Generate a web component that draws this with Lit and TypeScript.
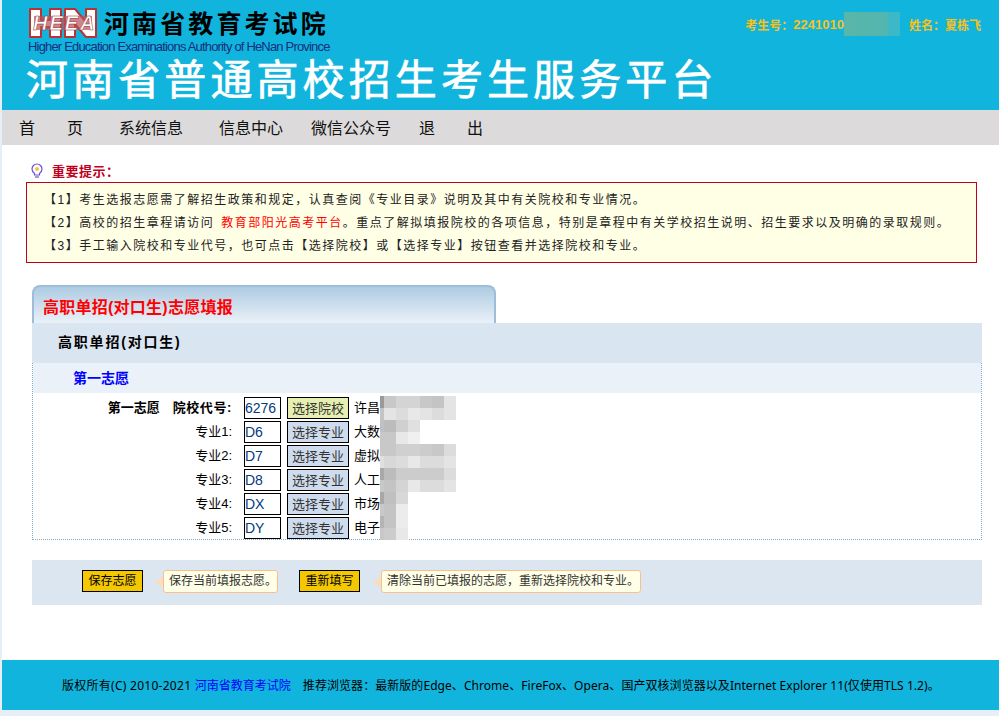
import { css, html, LitElement, svg } from "lit";
import { customElement } from "lit/decorators.js";

// grey levels of the blurred patch next to the school names, row by row
const MOSAIC: number[][] = [
  [0x9a, 0xc8, 0xd4, 0xd4, 0xc8, 0xc4, 0xe4],
  [0xc4, 0xe4, 0xdc, 0xe8, 0xe4, 0xdc, 0xe4],
  [0xc0, 0xbc, 0xd0, 0xe0],
  [0xc8, 0xc8, 0xe8, 0xf0],
  [0xc8, 0xc8, 0xd0, 0xd0, 0xcc, 0xc8, 0xdc],
  [0xe0, 0xd8, 0xdc, 0xe8, 0xdc, 0xdc, 0xe4],
  [0xa8, 0xbc, 0xcc, 0xcc, 0xcc, 0xcc, 0xdc],
  [0xc8, 0xc4, 0xd4, 0xe8, 0xdc, 0xdc, 0xe4],
  [0xa8, 0xc0, 0xd8],
  [0xc8, 0xc4, 0xec],
  [0xb4, 0xc4, 0xec],
  [0xc8, 0xcc, 0xe8],
];

const ROWS = [
  { label: "专业1:", code: "D6", name: "大数据" },
  { label: "专业2:", code: "D7", name: "虚拟现" },
  { label: "专业3:", code: "D8", name: "人工智" },
  { label: "专业4:", code: "DX", name: "市场营" },
  { label: "专业5:", code: "DY", name: "电子商" },
];

@customElement("app-root")
export class AppRoot extends LitElement {
  static styles = css`
    :host {
      display: block;
      height: 716px;
      padding-left: 2px;
      box-sizing: border-box;
      background: #e6eff8;
      overflow: hidden;
      font-family: "Liberation Sans", "Noto Sans CJK SC", sans-serif;
      font-size: 12px;
      color: #000;
    }

    .header {
      height: 110px;
      background: #11b4dc;
      display: flex;
      justify-content: space-between;
    }
    .brand {
      padding: 6px 0 0 26px;
    }
    .brand-top {
      display: flex;
      align-items: center;
      gap: 6px;
      height: 34px;
    }
    .brand-name {
      font-size: 25px;
      font-weight: 700;
      letter-spacing: 3.1px;
      line-height: 34px;
      margin-top: 2px;
    }
    .brand-en {
      height: 14px;
      font-size: 13px;
      line-height: 14px;
      letter-spacing: -0.82px;
      color: #14307f;
      white-space: nowrap;
    }
    .brand-title {
      margin: 1px 0 0 -2px;
      font-size: 42px;
      line-height: 52px;
      letter-spacing: 4.1px;
      color: #fff;
      -webkit-text-stroke: 0.7px #fff;
      white-space: nowrap;
    }
    .user {
      display: flex;
      align-items: center;
      height: 24px;
      margin: 12px 18px 0 0;
      font-size: 12px;
      font-weight: 700;
      color: #f9c11a;
      white-space: nowrap;
    }
    .user-id {
      font-size: 13px;
    }
    .user-blur {
      width: 56px;
      height: 24px;
      margin-right: 9px;
      background: linear-gradient(90deg, #5ab6a8 0, #52b6b0 44px, #3cb8c6 44px);
    }

    .nav {
      height: 35px;
      background: #dcdadb;
      display: flex;
      align-items: center;
      padding: 0 0 2px 17px;
      box-sizing: border-box;
      font-size: 16px;
      color: #111;
    }
    .nav span {
      margin-right: 28px;
    }
    .nav .pair {
      letter-spacing: 32px;
      margin-right: 4px;
    }
    .nav .pair:last-child {
      margin-right: 0;
    }
    .nav .wide {
      margin-right: 36px;
    }

    .main {
      height: 515px;
      background: #fff;
      padding-left: 24px;
      box-sizing: border-box;
    }
    .tip-head {
      display: flex;
      align-items: center;
      height: 37px;
      padding: 13px 0 0 5px;
      box-sizing: border-box;
      gap: 9px;
      color: #c00020;
      font-weight: 700;
      font-size: 13px;
      letter-spacing: 0.5px;
    }
    .notice {
      width: 951px;
      height: 81px;
      box-sizing: border-box;
      border: 1px solid #c00020;
      background: #ffffe6;
      padding: 6px 0 0 17px;
      font-size: 12px;
      line-height: 23px;
      letter-spacing: 1.5px;
      color: #222;
      white-space: nowrap;
    }
    .notice a {
      color: #f00;
      margin-left: 7px;
    }

    .panel {
      width: 950px;
      margin: 22px 0 0 6px;
    }
    .tab {
      width: 464px;
      height: 38px;
      box-sizing: border-box;
      border: 2px solid #9dbdd8;
      border-bottom: 0;
      border-radius: 8px 8px 0 0;
      background: linear-gradient(#aecbe2, #eaf1f8);
      padding-left: 9px;
      font-size: 16px;
      font-weight: 700;
      line-height: 42px;
      letter-spacing: 0.25px;
      color: #f00;
      white-space: nowrap;
    }
    .section {
      height: 40px;
      background: #d9e5f0;
      padding-left: 26px;
      font-size: 14px;
      font-weight: 700;
      line-height: 39px;
      letter-spacing: 1.8px;
    }
    .table {
      position: relative;
      border: 1px dotted #7fa9c9;
      border-top: 0;
      height: 177px;
      box-sizing: border-box;
    }
    .choice {
      height: 30px;
      background: #eaf1f9;
      padding-left: 40px;
      font-size: 14px;
      font-weight: 700;
      line-height: 30px;
      color: #00f;
    }
    .rows {
      display: grid;
      grid-template-columns: 199px 37px 62px 1fr;
      grid-auto-rows: 24px;
      column-gap: 6px;
      padding: 3px 0 0 6px;
      align-items: center;
    }
    .label {
      margin-top: -3px;
      padding-right: 6px;
      text-align: right;
      font-size: 13px;
      white-space: nowrap;
    }
    .label b + b {
      margin-left: 13px;
      letter-spacing: 0.6px;
    }
    .code {
      width: 37px;
      height: 22px;
      box-sizing: border-box;
      border: 1px solid #000;
      font-size: 14px;
      line-height: 21px;
      color: #003a80;
      background: #fff;
    }
    .pick {
      width: 62px;
      height: 22px;
      box-sizing: border-box;
      border: 1px solid #000;
      background: #cfdcee;
      font-size: 13px;
      line-height: 21px;
      text-align: center;
      color: #333;
    }
    .pick.school {
      background: #e6efb0;
    }
    .name {
      margin: -3px 0 0 -1px;
      font-size: 13px;
      white-space: nowrap;
      overflow: hidden;
    }
    .mosaic {
      position: absolute;
      left: 347px;
      top: 33px;
    }
    .mosaic div {
      display: flex;
      height: 12px;
    }
    .mosaic i {
      width: 12px;
      height: 12px;
    }
    .mosaic i:first-child {
      width: 4px;
    }

    .actions {
      margin-top: 20px;
      height: 45px;
      background: #dbe6f0;
      display: flex;
      align-items: flex-start;
      padding: 10px 0 0 50px;
      box-sizing: border-box;
    }
    .save {
      width: 61px;
      height: 22px;
      box-sizing: border-box;
      border: 1px solid #000;
      background: #f4c800;
      font-size: 12px;
      line-height: 20px;
      text-align: center;
      margin-right: 20px;
    }
    .bubble {
      position: relative;
      height: 23px;
      box-sizing: border-box;
      border: 1px solid #f9c08c;
      border-radius: 3px;
      background: #ffffe8;
      padding-left: 5px;
      font-size: 12px;
      line-height: 21px;
      color: #333;
      margin-right: 21px;
      white-space: nowrap;
    }
    .bubble.long {
      margin-left: 1px;
      padding-right: 1px;
    }
    .bubble::before {
      content: "";
      position: absolute;
      left: -9px;
      top: 6px;
      border-style: solid;
      border-width: 5px 8px 5px 0;
      border-color: transparent #fbdcbb transparent transparent;
    }

    .footer {
      height: 50px;
      background: #11b4dc;
      padding-left: 60px;
      font-family: "Noto Sans", "Noto Sans CJK SC", sans-serif;
      font-size: 12px;
      line-height: 52px;
      letter-spacing: 0.055px;
      white-space: nowrap;
    }
    .footer span {
      letter-spacing: 0.27px;
    }
    .footer a {
      color: #00f;
      margin-right: 9px;
      letter-spacing: 0;
    }
  `;

  private _logo() {
    return svg`
      <path d="M2 2h11v11h9V2h11v28H22V20h-9v10H2z" fill="#fff" stroke="#b83434" stroke-width="2" stroke-linejoin="round" />
      <path d="M37 2h10l11 13V2h10v28H58L47 17v13H37z" fill="#fff" stroke="#b83434" stroke-width="2" stroke-linejoin="round" />
      <rect x="6" y="9" width="58" height="14" fill="#b8505a" opacity="0.7" />
      <text x="5" y="23" font-family="Liberation Sans" font-size="20" font-weight="700" font-style="italic" letter-spacing="2" fill="#fff" stroke="#8f2a2a" stroke-width="0.5">HEEA</text>
    `;
  }

  render() {
    return html`
      <div class="header">
        <div class="brand">
          <div class="brand-top">
            <svg width="70" height="32" viewBox="0 0 70 32">${this._logo()}</svg>
            <div class="brand-name">河南省教育考试院</div>
          </div>
          <div class="brand-en">Higher Education Examinations Authority of HeNan Province</div>
          <div class="brand-title">河南省普通高校招生考生服务平台</div>
        </div>
        <div class="user">
          考生号：<span class="user-id">2241010</span><span class="user-blur"></span>姓名：夏栋飞
        </div>
      </div>
      <div class="nav">
        <span class="pair">首页</span>
        <span class="wide">系统信息</span>
        <span>信息中心</span>
        <span>微信公众号</span>
        <span class="pair">退出</span>
      </div>
      <div class="main">
        <div class="tip-head">
          <svg width="12" height="15" viewBox="0 0 12 15">
            <path d="M3.500 10.500C2 9.300 1 7.800 1 6a5 5 0 0 1 10 0c0 1.800-1 3.300-2.500 4.500V12h-5z" fill="#fff" stroke="#6a50d8" stroke-width="1.200" />
            <circle cx="6" cy="6" r="2" fill="#f2c63a" />
            <path d="M4 14h4" stroke="#6a50d8" stroke-width="1.200" />
          </svg>
          <span>重要提示：</span>
        </div>
        <div class="notice">
          <div>【1】考生选报志愿需了解招生政策和规定，认真查阅《专业目录》说明及其中有关院校和专业情况。</div>
          <div>【2】高校的招生章程请访问<a>教育部阳光高考平台</a>。重点了解拟填报院校的各项信息，特别是章程中有关学校招生说明、招生要求以及明确的录取规则。</div>
          <div>【3】手工输入院校和专业代号，也可点击【选择院校】或【选择专业】按钮查看并选择院校和专业。</div>
        </div>
        <div class="panel">
          <div class="tab">高职单招(对口生)志愿填报</div>
          <div class="section">高职单招(对口生)</div>
          <div class="table">
            <div class="choice">第一志愿</div>
            <div class="rows">
              <div class="label"><b>第一志愿</b><b>院校代号:</b></div>
              <div class="code">6276</div>
              <div class="pick school">选择院校</div>
              <div class="name">许昌职</div>
              ${ROWS.map(
                (r) => html`
                  <div class="label">${r.label}</div>
                  <div class="code">${r.code}</div>
                  <div class="pick">选择专业</div>
                  <div class="name">${r.name}</div>
                `
              )}
            </div>
            <div class="mosaic">
              ${MOSAIC.map(
                (row) => html`<div>
                  ${row.map(
                    (v) => html`<i style="background:rgb(${v},${v},${v})"></i>`
                  )}
                </div>`
              )}
            </div>
          </div>
          <div class="actions">
            <div class="save">保存志愿</div>
            <div class="bubble">保存当前填报志愿。</div>
            <div class="save">重新填写</div>
            <div class="bubble long">清除当前已填报的志愿，重新选择院校和专业。</div>
          </div>
        </div>
      </div>
      <div class="footer">
        <span>版权所有(C) 2010-2021 </span><a>河南省教育考试院</a> 推荐浏览器：最新版的Edge、Chrome、FireFox、Opera、国产双核浏览器以及Internet Explorer 11(仅使用TLS 1.2)。
      </div>
    `;
  }
}
